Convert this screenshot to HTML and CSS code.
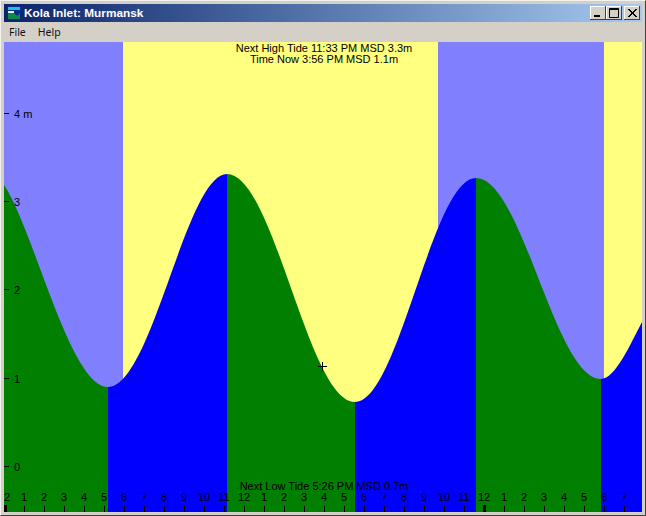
FILE: index.html
```html
<!DOCTYPE html>
<html lang="en">
  <head>
    <meta charset="UTF-8" />
    <title>Kola Inlet: Murmansk</title>
    <link rel="stylesheet" href="styles.css">
  </head>
  <body>
    <div class="window">
      <div class="titlebar">
        <svg class="app-icon" width="14" height="14" viewBox="0 0 14 14">
          <rect x="0" y="0" width="14" height="14" fill="#0a2a8a"/>
          <rect x="1" y="1" width="12" height="3" fill="#20c0e0"/>
          <path d="M1 8 C4 5 6 6 8 8 S11 10 13 7 V13 H1 Z" fill="#108848"/>
          <path d="M1 5 H7 V7 H1 Z" fill="#e0f0ff"/>
        </svg>
        <span class="title">Kola Inlet: Murmansk</span>
        <div class="buttons">
          <div class="btn">
            <svg width="16" height="14" viewBox="0 0 16 14"><rect x="4" y="9" width="6" height="2" fill="#000"/></svg>
          </div>
          <div class="btn">
            <svg width="16" height="14" viewBox="0 0 16 14"><path d="M3.500 2.500 H12.500 V11.500 H3.500 Z M3 3.500 H13" fill="none" stroke="#000"/></svg>
          </div>
          <div class="btn btn-close">
            <svg width="16" height="14" viewBox="0 0 16 14"><path d="M4 3 L12 11 M5 3 L13 11 M12 3 L4 11 M13 3 L5 11" fill="none" stroke="#000"/></svg>
          </div>
        </div>
      </div>
      <div class="menubar">
        <span class="menu-item">File</span>
        <span class="menu-item">Help</span>
      </div>
      <div class="chart">
        <svg class="tide" width="638" height="470" viewBox="4 42 638 470">
          <!-- day and night bands -->
          <rect x="4" y="42" width="119" height="470" fill="#8080ff"/>
          <rect x="123" y="42" width="315" height="470" fill="#ffff80"/>
          <rect x="438" y="42" width="166" height="470" fill="#8080ff"/>
          <rect x="604" y="42" width="38" height="470" fill="#ffff80"/>

          <!-- falling water is green, rising water is blue -->
          <path class="fall" d="M4 185 C34 230 70 387 108 387 V512 H4 Z"/>
          <path class="rise" d="M108 387 C152 387 186 174 227 174 V512 H108 Z"/>
          <path class="fall" d="M227 174 C274 174 308 402 355 402 V512 H227 Z"/>
          <path class="rise" d="M355 402 C399 402 432 178 476 178 V512 H355 Z"/>
          <path class="fall" d="M476 178 C522 178 555 379 601 379 V512 H476 Z"/>
          <path class="rise" d="M601 379 C615 379 630 345 642 322 V512 H601 Z"/>

          <!-- height scale -->
          <g class="label">
            <text x="14" y="118">4 m</text>
            <text x="14" y="206">3</text>
            <text x="14" y="294">2</text>
            <text x="14" y="383">1</text>
            <text x="14" y="471">0</text>
          </g>
          <path class="tick" d="M4 113.500 H9 M4 201.500 H9 M4 289.500 H9 M4 378.500 H9 M4 466.500 H9"/>

          <!-- tide captions -->
          <g class="caption">
            <text x="324" y="52">Next High Tide 11:33 PM MSD 3.3m</text>
            <text x="324" y="63">Time Now 3:56 PM MSD 1.1m</text>
            <text x="324" y="490">Next Low Tide 5:26 PM MSD 0.7m</text>
          </g>

          <!-- hour scale -->
          <g class="hours">
            <text x="7" y="501">2</text><text x="24" y="501">1</text><text x="44" y="501">2</text><text x="64" y="501">3</text>
            <text x="84" y="501">4</text><text x="104" y="501">5</text><text x="124" y="501">6</text><text x="144" y="501">7</text>
            <text x="164" y="501">8</text><text x="184" y="501">9</text><text x="204" y="501">10</text><text x="224" y="501">11</text>
            <text x="244" y="501">12</text><text x="264" y="501">1</text><text x="284" y="501">2</text><text x="304" y="501">3</text>
            <text x="324" y="501">4</text><text x="344" y="501">5</text><text x="364" y="501">6</text><text x="384" y="501">7</text>
            <text x="404" y="501">8</text><text x="424" y="501">9</text><text x="444" y="501">10</text><text x="464" y="501">11</text>
            <text x="484" y="501">12</text><text x="504" y="501">1</text><text x="524" y="501">2</text><text x="544" y="501">3</text>
            <text x="564" y="501">4</text><text x="584" y="501">5</text><text x="604" y="501">6</text><text x="624" y="501">7</text>
          </g>
          <path class="tick" d="M24.500 506 V512 M44.500 506 V512 M64.500 506 V512 M84.500 506 V512 M104.500 506 V512 M124.500 506 V512 M144.500 506 V512 M164.500 506 V512 M184.500 506 V512 M204.500 506 V512 M224.500 506 V512 M244.500 506 V512 M264.500 506 V512 M284.500 506 V512 M304.500 506 V512 M324.500 506 V512 M344.500 506 V512 M364.500 506 V512 M384.500 506 V512 M404.500 506 V512 M424.500 506 V512 M444.500 506 V512 M464.500 506 V512 M504.500 506 V512 M524.500 506 V512 M544.500 506 V512 M564.500 506 V512 M584.500 506 V512 M604.500 506 V512 M624.500 506 V512"/>
          <!-- midnight marks are heavier -->
          <rect x="4" y="505" width="3" height="7" fill="#000"/>
          <rect x="483" y="505" width="3" height="7" fill="#000"/>

          <!-- cursor -->
          <path class="tick" d="M318 366.500 H327 M322.500 362 V371"/>
        </svg>
      </div>
    </div>
  </body>
</html>
```

FILE: styles.css
```css
* {
  padding: 0;
  margin: 0;
  box-sizing: border-box;
}
html,
body {
  width: 646px;
  height: 516px;
  overflow: hidden;
}
body {
  font-family: "Liberation Sans", Arial, sans-serif;
  background: #d4d0c8;
}
.window {
  width: 646px;
  height: 516px;
  background: #d4d0c8;
  border-top: 1px solid #f4f2ee;
  border-left: 1px solid #f4f2ee;
  border-right: 1px solid #404040;
  border-bottom: 1px solid #404040;
  padding: 3px;
  display: flex;
  flex-direction: column;
}
.titlebar {
  height: 18px;
  flex: none;
  display: flex;
  align-items: center;
  padding-left: 3px;
  background: linear-gradient(to right, #0a246a, #a6caf0);
}
.app-icon {
  flex: none;
  margin-right: 3px;
}
.title {
  color: #ffffff;
  font-size: 11.800px;
  font-weight: bold;
  white-space: nowrap;
}
.buttons {
  margin-left: auto;
  margin-right: 2px;
  display: flex;
}
.btn {
  width: 16px;
  height: 14px;
  background: #d4d0c8;
  box-shadow: inset -1px -1px 0 #404040, inset 1px 1px 0 #ffffff;
}
.btn-close {
  margin-left: 2px;
}
.btn svg {
  display: block;
}
.menubar {
  height: 19px;
  margin-bottom: 1px;
  flex: none;
  display: flex;
  align-items: center;
  gap: 12px;
  padding-left: 5px;
  font-family: "Noto Sans", sans-serif;
  font-size: 10.500px;
  color: #111111;
}
.chart {
  flex: 1;
  min-height: 0;
}
.tide {
  display: block;
}
.tide text {
  font-family: "Liberation Sans", Arial, sans-serif;
  font-size: 11px;
  fill: #000000;
}
.fall {
  fill: #007f00;
}
.rise {
  fill: #0000ff;
}
.tick {
  fill: none;
  stroke: #000000;
  stroke-width: 1;
}
.caption text,
.hours text {
  text-anchor: middle;
}
```
